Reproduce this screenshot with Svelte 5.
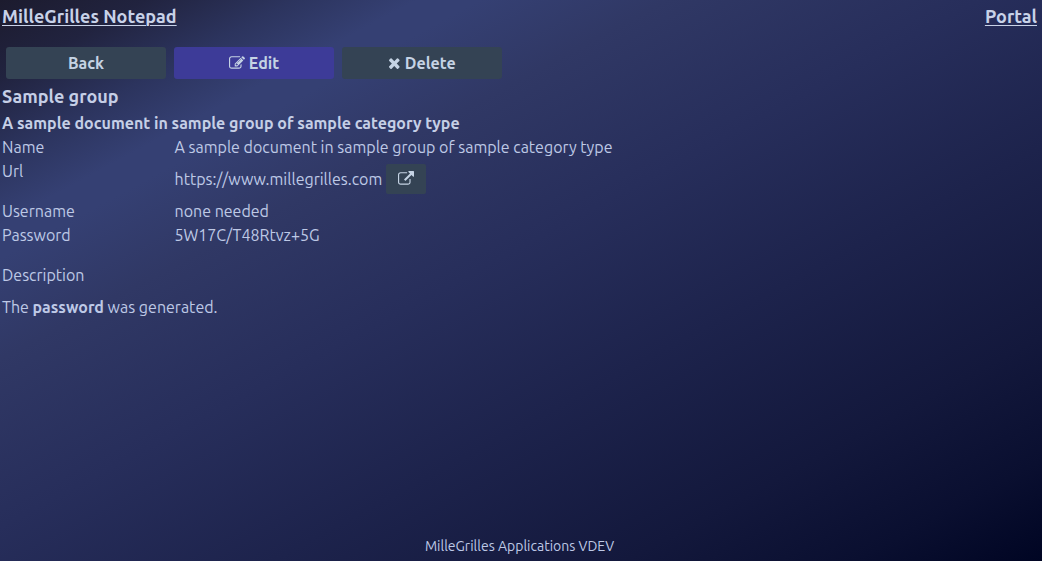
<script>
  const after = [
    ['Username', 'none needed'],
    ['Password', '5W17C/T48Rtvz+5G'],
  ];
</script>

<div class="page">
  <header>
    <a href="#home">MilleGrilles Notepad</a>
    <a href="#portal">Portal</a>
  </header>

  <main>
    <nav class="actions">
      <button>Back</button>
      <button class="primary">
        <svg width="16" height="16" viewBox="0 0 1792 1792"><path d="M888 1184l116-116-152-152-116 116v56h96v96h56zm440-720q-16-16-33 1l-350 350q-17 17-1 33t33-1l350-350q17-17 1-33zm80 594v190q0 119-84.5 203.5t-203.5 84.5h-832q-119 0-203.5-84.5t-84.5-203.5v-832q0-119 84.5-203.5t203.5-84.5h832q63 0 117 25 15 7 18 23 3 17-9 29l-49 49q-14 14-32 8-23-6-45-6h-832q-66 0-113 47t-47 113v832q0 66 47 113t113 47h832q66 0 113-47t47-113v-126q0-13 9-22l64-64q15-15 35-7t20 29zm-96-738l288 288-672 672h-288v-288zm444 132l-92 92-288-288 92-92q28-28 68-28t68 28l152 152q28 28 28 68t-28 68z" /></svg>
        Edit
      </button>
      <button>
        <svg width="12.5" height="16" viewBox="192 0 1400 1792"><path d="M1490 1322q0 40-28 68l-136 136q-28 28-68 28t-68-28l-294-294-294 294q-28 28-68 28t-68-28l-136-136q-28-28-28-68t28-68l294-294-294-294q-28-28-28-68t28-68l136-136q28-28 68-28t68 28l294 294 294-294q28-28 68-28t68 28l136 136q28 28 28 68t-28 68l-294 294 294 294q28 28 28 68z" /></svg>
        Delete
      </button>
    </nav>

    <h1>Sample group</h1>
    <h2>A sample document in sample group of sample category type</h2>

    <dl>
      <dt>Name</dt>
      <dd>A sample document in sample group of sample category type</dd>
      <dt>Url</dt>
      <dd class="url">
        <span>https://www.millegrilles.com</span>
        <button class="open" aria-label="Open">
          <svg width="16" height="16" viewBox="0 0 1792 1792"><path d="M1408 928v320q0 119-84.5 203.5t-203.5 84.5h-832q-119 0-203.5-84.5t-84.5-203.5v-832q0-119 84.5-203.5t203.5-84.5h704q14 0 23 9t9 23v64q0 14-9 23t-23 9h-704q-66 0-113 47t-47 113v832q0 66 47 113t113 47h832q66 0 113-47t47-113v-320q0-14 9-23t23-9h64q14 0 23 9t9 23zm384-864v512q0 26-19 45t-45 19-45-19l-176-176-652 652q-10 10-23 10t-23-10l-114-114q-10-10-10-23t10-23l652-652-176-176q-19-19-19-45t19-45 45-19h512q26 0 45 19t19 45z" /></svg>
        </button>
      </dd>
      {#each after as [label, value]}
        <dt>{label}</dt>
        <dd>{value}</dd>
      {/each}
    </dl>

    <div class="label">Description</div>
    <p>The <strong>password</strong> was generated.</p>
  </main>

  <footer>MilleGrilles Applications VDEV</footer>
</div>

<style>
  :global(body) { margin: 0; background: #000523; }
  .page {
    box-sizing: border-box;
    height: 561px;
    display: flex;
    flex-direction: column;
    overflow: hidden;
    color: #bec9e6;
    font: 400 16px/24px Ubuntu, "Open Sans", "Noto Sans", sans-serif;
    white-space: nowrap;
    background: linear-gradient(to bottom right, #1c1b2e 0%, #21233f 7%, #2c345e 14%, #354073 20%, #354073 23%, #303865 32%, #272e5b 47%, #1d234c 63%, #13183c 80%, #0a0f30 91%, #000523 100%);
  }
  header {
    display: flex;
    justify-content: space-between;
    height: 43px;
    padding: 2px 5px 0 2px;
    box-sizing: border-box;
    font-size: 18px;
    line-height: 28px;
    font-weight: 600;
  }
  header a { color: #c8d2e8; text-decoration: underline; text-underline-offset: 2px; text-decoration-thickness: 1px; }
  main { flex: 1; }
  .actions { display: flex; gap: 8px; padding: 4px 6px 3px; }
  button {
    width: 160px;
    height: 32px;
    display: flex;
    align-items: center;
    justify-content: center;
    gap: 4px;
    padding: 0;
    border: 0;
    border-radius: 3px;
    background: #344354;
    color: #c5d3e4;
    font: inherit;
    font-weight: 600;
  }
  button.primary { background: #3d3b98; }
  svg { fill: currentColor; flex: none; }
  h1, h2, dl, dd, p { margin: 0; }
  h1 { padding-left: 2px; font-size: 18px; line-height: 28px; font-weight: 600; color: #c5cfe6; }
  h2 { padding: 1px 0 0 2px; font-size: 16px; line-height: 24px; font-weight: 600; color: #c5cfe6; }
  dl { display: grid; grid-template-columns: 172.5px 1fr; grid-template-rows: 24px 40px 24px 24px; padding-left: 2px; }
  .url { display: flex; align-items: center; gap: 4px; }
  .open { width: 40px; height: 30px; border-radius: 2px; }
  .label { padding: 16px 2px 0; }
  p { padding: 8px 2px 0; }
  strong { font-weight: 600; }
  footer { height: 27px; padding-right: 3px; text-align: center; font-size: 14px; line-height: 24px; }
</style>
